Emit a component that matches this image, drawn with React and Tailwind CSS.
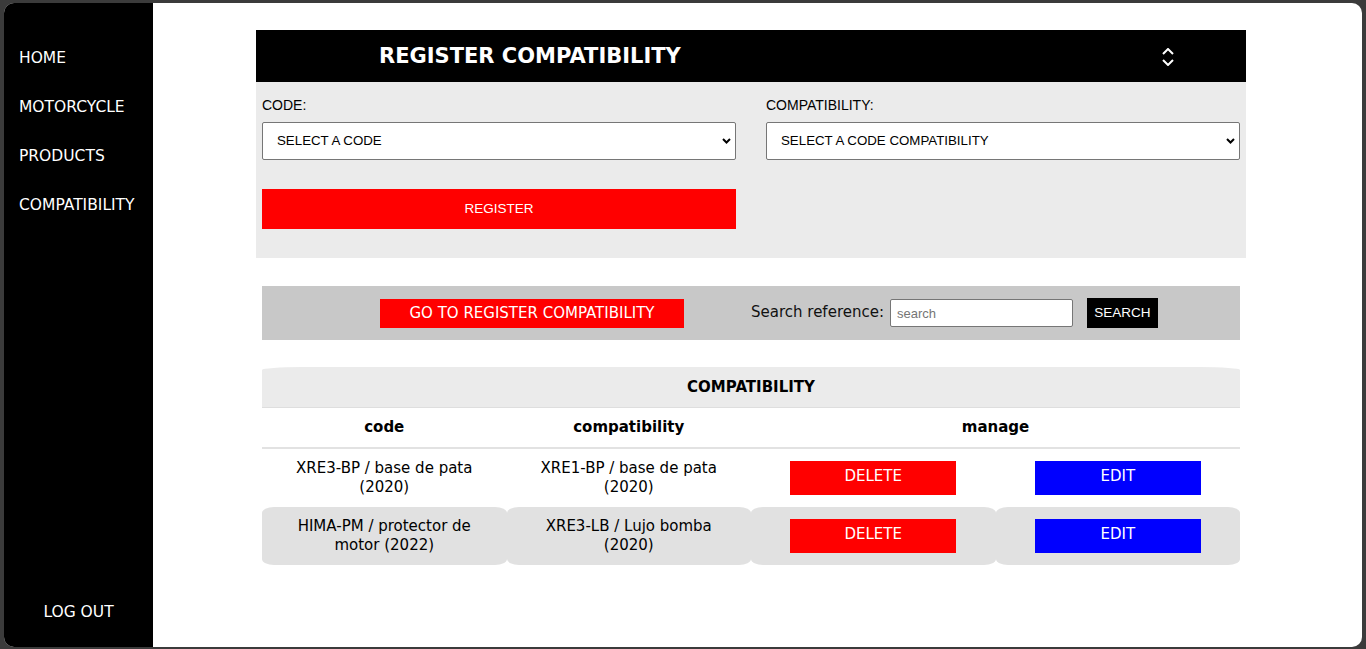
import React from "react";

function Chevron() {
  return (
    <svg width="9" height="6" viewBox="0 0 9 6" fill="none">
      <path d="M1 1l3.5 3.5L8 1" stroke="#000" strokeWidth="2" />
    </svg>
  );
}

function Select({ label }) {
  return (
    <div className="h-[38px] bg-white border border-[#767676] rounded-[2px] flex items-center justify-between pl-[14px] pr-[4px] text-[13.3px] text-black">
      <span>{label}</span>
      <Chevron />
    </div>
  );
}

const rows = [
  { code: ["XRE3-BP / base de pata", "(2020)"], comp: ["XRE1-BP / base de pata", "(2020)"], grey: false },
  { code: ["HIMA-PM / protector de", "motor (2022)"], comp: ["XRE3-LB / Lujo bomba", "(2020)"], grey: true },
];

export default function App() {
  const cell = "flex flex-col items-center justify-center leading-[19px]";
  const greyCell = "bg-[#e1e1e1] [border-radius:12px/6px]";
  return (
    <div className="w-[1366px] h-[649px] bg-[#3b3b3b] pt-[3px] pl-[4px] pr-[4px] pb-[2px] font-['DejaVu_Sans',sans-serif] text-[15px] text-black">
      <div className="flex h-full rounded-[10px] overflow-hidden bg-white">
        {/* Sidebar */}
        <div className="w-[149px] bg-black flex flex-col justify-between text-white pt-[31px] pb-[10px]">
          <div className="flex flex-col pl-[15px] text-[15.5px]">
            <div className="h-[49px] flex items-center">HOME</div>
            <div className="h-[49px] flex items-center">MOTORCYCLE</div>
            <div className="h-[49px] flex items-center">PRODUCTS</div>
            <div className="h-[49px] flex items-center">COMPATIBILITY</div>
          </div>
          <div className="h-[49px] flex items-center justify-center text-[15.5px]">LOG OUT</div>
        </div>

        {/* Main */}
        <div className="flex-1 pt-[27px]">
          {/* Register panel */}
          <div className="ml-[103px] w-[990px]">
            <div className="h-[52px] bg-black flex items-center justify-between pl-[123px] pr-[72px]">
              <span className="text-white font-bold text-[21px] mt-[2px]">REGISTER COMPATIBILITY</span>
              <svg width="12" height="18" viewBox="0 0 12 18" fill="none" className="mt-[1px]">
                <path d="M1 6L6 1l5 5" stroke="#fff" strokeWidth="2" />
                <path d="M1 12l5 5 5-5" stroke="#fff" strokeWidth="2" />
              </svg>
            </div>
            <div className="bg-[#ebebeb] h-[176px] pt-[14px] px-[6px] font-['Liberation_Sans',Arial,sans-serif]">
              <div className="grid grid-cols-2 gap-x-[30px]">
                <div>
                  <div className="h-[16px] leading-[16px] text-[14px] mt-[1px]">CODE:</div>
                  <div className="mt-[9px]">
                    <Select label="SELECT A CODE" />
                  </div>
                  <button className="mt-[29px] w-full h-[40px] bg-[#ff0000] text-white text-[13.5px]">
                    REGISTER
                  </button>
                </div>
                <div>
                  <div className="h-[16px] leading-[16px] text-[14px] mt-[1px]">COMPATIBILITY:</div>
                  <div className="mt-[9px]">
                    <Select label="SELECT A CODE COMPATIBILITY" />
                  </div>
                </div>
              </div>
            </div>
          </div>

          {/* Search bar */}
          <div className="ml-[109px] w-[978px] mt-[28px] h-[54px] bg-[#c8c8c8] flex items-center pl-[118px]">
            <button className="w-[304px] h-[29px] bg-[#ff0000] text-white text-[15px] flex items-center justify-center pt-[1px]">
              GO TO REGISTER COMPATIBILITY
            </button>
            <span className="ml-[67px] text-[15px] text-[#111] -mt-[1px]">Search reference:</span>
            <div className="ml-[6px] w-[183px] h-[28px] bg-white border border-[#767676] rounded-[2px] flex items-center pl-[6px] pt-[1px] text-[13px] text-[#757575] font-['Liberation_Sans',Arial,sans-serif]">
              search
            </div>
            <button className="ml-[14px] w-[71px] h-[30px] bg-black text-white text-[13.5px] font-['Liberation_Sans',Arial,sans-serif] flex items-center justify-center">
              SEARCH
            </button>
          </div>

          {/* Table */}
          <div className="ml-[109px] w-[978px] mt-[27px]">
            <div className="h-[41px] bg-[#ebebeb] [border-radius:40px_40px_0_0/3px_3px_0_0] border-b border-[#dedede] flex items-center justify-center font-bold">
              COMPATIBILITY
            </div>
            <div className="grid grid-cols-4 h-[41px] border-b-2 border-[#e2e2e2] font-bold">
              <div className="flex items-center justify-center">code</div>
              <div className="flex items-center justify-center">compatibility</div>
              <div className="col-span-2 flex items-center justify-center">manage</div>
            </div>
            {rows.map((r, i) => (
              <div key={i} className="grid grid-cols-4 h-[58px]">
                <div className={`${cell} ${r.grey ? greyCell : ""}`}>
                  <span>{r.code[0]}</span>
                  <span>{r.code[1]}</span>
                </div>
                <div className={`${cell} ${r.grey ? greyCell : ""}`}>
                  <span>{r.comp[0]}</span>
                  <span>{r.comp[1]}</span>
                </div>
                <div className={`flex items-center justify-center ${r.grey ? greyCell : ""}`}>
                  <button className="w-[166px] h-[34px] bg-[#ff0000] text-white text-[15px] flex items-center justify-center pb-[4px]">
                    DELETE
                  </button>
                </div>
                <div className={`flex items-center justify-center ${r.grey ? greyCell : ""}`}>
                  <button className="w-[166px] h-[34px] bg-[#0000ff] text-white text-[15px] flex items-center justify-center pb-[4px]">
                    EDIT
                  </button>
                </div>
              </div>
            ))}
          </div>
        </div>
      </div>
    </div>
  );
}
